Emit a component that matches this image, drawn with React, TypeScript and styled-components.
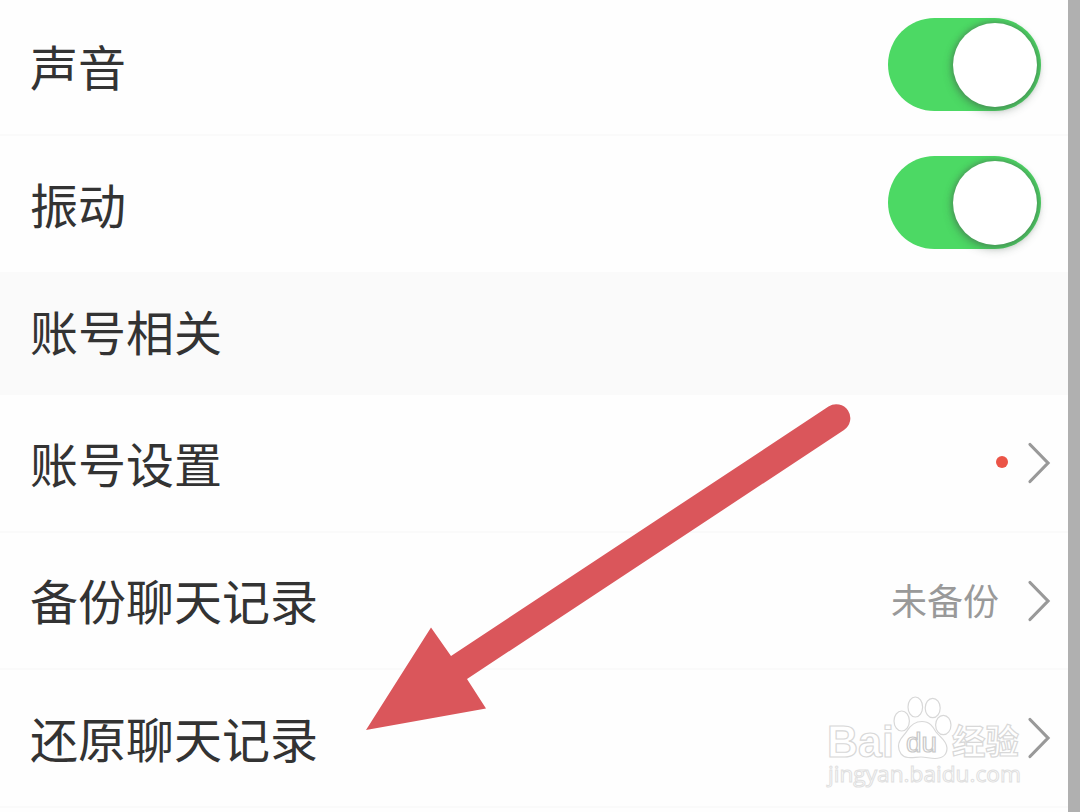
import styled, { createGlobalStyle } from 'styled-components';

type SettingRowProps = {
  label: string;
  height: number;
  value?: string;
  dot?: boolean;
  toggle?: boolean;
};

const GlobalStyle = createGlobalStyle`
  * {
    box-sizing: border-box;
  }

  body {
    margin: 0;
    overflow: hidden;
    background-color: #b0b0b0;
    font-family: 'Noto Sans CJK SC', 'Noto Sans', sans-serif;
  }
`;

const Screen = styled.div`
  position: relative;
  width: 1080px;
  height: 812px;
  overflow: hidden;
  border-right: 12px solid #b0b0b0;
  background-color: #fefefe;
`;

const List = styled.div`
  margin-top: -2px;
`;

const Row = styled.div<{ $height: number }>`
  height: ${(props) => props.$height}px;
  padding: 0 17px 0 30px;
  display: flex;
  align-items: center;
  border-bottom: 2px solid #fafafa;
`;

const SectionTitle = styled.div`
  height: 121px;
  padding: 0 30px 10px;
  display: flex;
  align-items: center;
  font-size: 48px;
  line-height: 72px;
  color: #333;
  background-color: #fafafa;
`;

const Label = styled.span`
  flex: 1;
  padding-bottom: 3px;
  font-size: 48px;
  line-height: 72px;
  color: #333;
`;

const Value = styled.span`
  margin-right: 28px;
  padding-bottom: 3px;
  font-size: 36px;
  line-height: 54px;
  color: #999;
`;

const Dot = styled.span`
  width: 12px;
  height: 12px;
  margin: 0 19px 3px 0;
  border-radius: 50%;
  background-color: #eb5447;
`;

const Track = styled.div`
  width: 153px;
  height: 93px;
  margin: 0 10px 3px 0;
  padding: 5px 4.5px;
  display: flex;
  justify-content: flex-end;
  border-radius: 47px;
  background-color: #4cd964;
`;

const Knob = styled.div`
  width: 84px;
  height: 84px;
  border-radius: 50%;
  background-color: #fff;
  box-shadow: 0 3px 8px 2px rgba(60, 80, 65, 0.3), 0 0 4px 2px rgba(80, 110, 85, 0.35);
`;

const Overlay = styled.svg`
  position: absolute;
  top: 0;
  left: 0;
`;

function Chevron() {
  return (
    <svg width="24" height="42" viewBox="0 0 24 42" fill="none">
      <path
        d="M3 2.5 L21 21 L3 39.5"
        stroke="#999"
        strokeWidth="3.2"
        strokeLinecap="round"
      />
    </svg>
  );
}

function SettingRow({ label, height, value, dot, toggle }: SettingRowProps) {
  return (
    <Row $height={height}>
      <Label>{label}</Label>
      {value ? <Value>{value}</Value> : null}
      {dot ? <Dot /> : null}
      {toggle ? (
        <Track>
          <Knob />
        </Track>
      ) : (
        <Chevron />
      )}
    </Row>
  );
}

function Watermark() {
  return (
    <g
      fill="#fff"
      stroke="#d8d8d8"
      strokeWidth="1.2"
      fontFamily="'Liberation Sans', sans-serif"
    >
      <text x="827" y="757" fontSize="45" fontWeight="bold" textLength="67" lengthAdjust="spacingAndGlyphs">
        Bai
      </text>
      <ellipse cx="901.7" cy="721" rx="7.7" ry="10" />
      <ellipse cx="915.3" cy="707" rx="7.3" ry="10" />
      <ellipse cx="932.7" cy="708" rx="7.5" ry="9.7" />
      <ellipse cx="943.3" cy="725" rx="7.7" ry="9.7" />
      <path d="M922 721.5 C930 721.5 933 727 936 732 C940 737 947 741 947 748 C947 755 942 758.5 935 758.5 C930 758.5 926 757 921 757 C916 757 913 758 908 757.5 C902 757 898.5 752 898.5 746 C898.5 739 904 736 907 731 C910 726 914 721.5 922 721.5 Z" />
      <text x="906" y="752" fontSize="27" textLength="31" lengthAdjust="spacingAndGlyphs" stroke="#c8c8c8">
        du
      </text>
      <text
        x="952"
        y="754"
        fontSize="34"
        fontWeight="bold"
        fontFamily="'Noto Sans CJK SC', sans-serif"
        textLength="67"
        lengthAdjust="spacingAndGlyphs"
      >
        经验
      </text>
      <text
        x="828"
        y="782"
        fontSize="22"
        textLength="193"
        lengthAdjust="spacingAndGlyphs"
        fontFamily="'Open Sans', 'Noto Sans', sans-serif"
        strokeWidth="1"
        stroke="#e0e0e0"
      >
        jingyan.baidu.com
      </text>
    </g>
  );
}

export default function App() {
  return (
    <>
      <GlobalStyle />
      <Screen>
        <List>
          <SettingRow label="声音" height={138} toggle />
          <SettingRow label="振动" height={138} toggle />
          <SectionTitle>账号相关</SectionTitle>
          <SettingRow label="账号设置" height={138} dot />
          <SettingRow label="备份聊天记录" height={137} value="未备份" />
          <SettingRow label="还原聊天记录" height={138} />
        </List>
        <Overlay width="1068" height="812" viewBox="0 0 1068 812">
          <path
            d="M366 730 L431 627.5 L451 656 L828.5 406.5 A14 14 0 0 1 844 430 L467 679 L486 708.5 Z"
            fill="#da565b"
          />
          <Watermark />
        </Overlay>
      </Screen>
    </>
  );
}
